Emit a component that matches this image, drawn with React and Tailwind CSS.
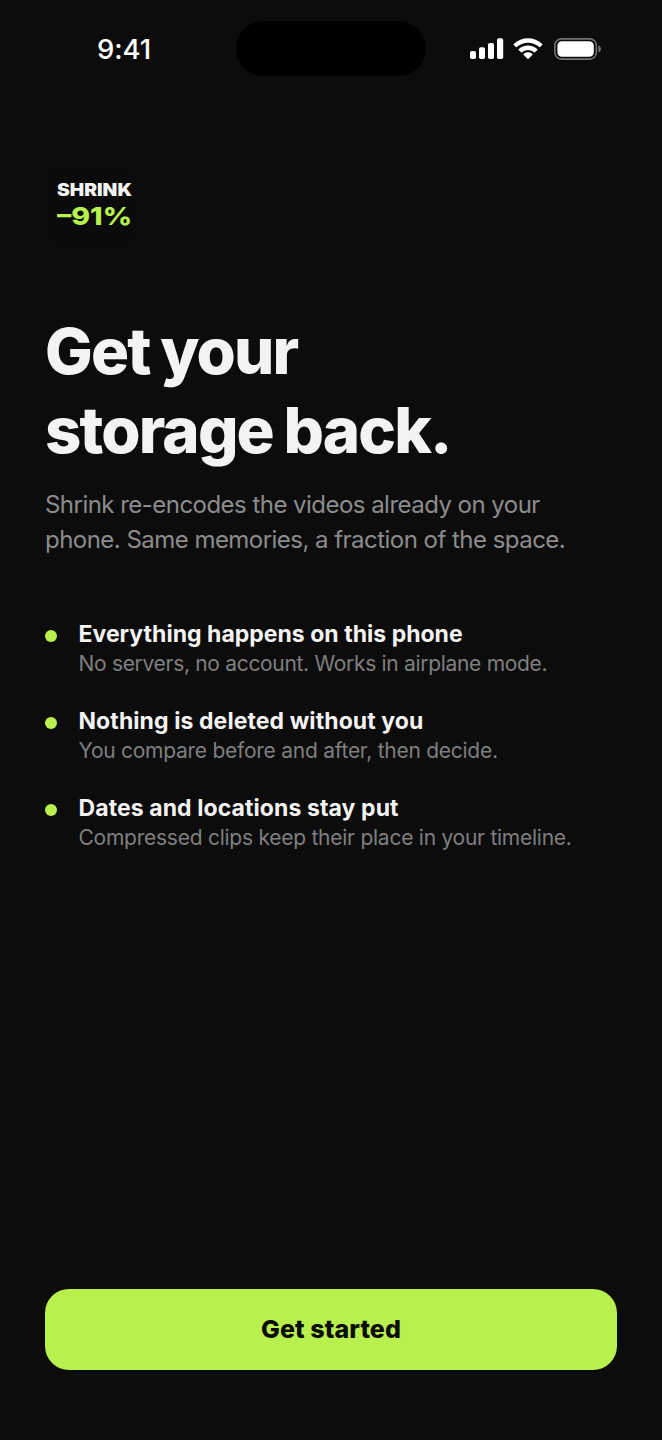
import React from 'react';

const features = [
  {
    title: 'Everything happens on this phone',
    text: 'No servers, no account. Works in airplane mode.',
    titleClass: 'tracking-[0.02px]',
    textClass: 'tracking-[-0.31px]'
  },
  {
    title: 'Nothing is deleted without you',
    text: 'You compare before and after, then decide.',
    titleClass: 'tracking-[0.09px]',
    textClass: 'tracking-[-0.26px]'
  },
  {
    title: 'Dates and locations stay put',
    text: 'Compressed clips keep their place in your timeline.',
    titleClass: 'tracking-[0.09px]',
    textClass: 'tracking-[-0.25px]'
  }
];

const SignalIcon = () => (
  <svg width="34" height="22" viewBox="0 0 34 22" fill="white">
    <rect x="0" y="13" width="6" height="8" rx="1.8" />
    <rect x="9" y="9.2" width="6" height="11.8" rx="1.8" />
    <rect x="18" y="5" width="6" height="16" rx="1.8" />
    <rect x="27" y="0.3" width="6.2" height="20.7" rx="1.8" />
  </svg>
);

const WifiIcon = () => (
  <svg width="30" height="22" viewBox="0 0 17 12.4" fill="white">
    <path d="M8.5 2.6c2.4 0 4.7.9 6.4 2.5.1.1.3.1.5 0l1.2-1.3c.2-.2.2-.4 0-.5C12.1-1 4.9-1 .4 3.3c-.2.1-.2.3 0 .5l1.2 1.3c.2.1.4.1.5 0 1.7-1.6 4-2.5 6.4-2.5z" />
    <path d="M8.5 6.7c1.3 0 2.6.5 3.5 1.4.2.1.4.1.5 0l1.3-1.3c.1-.2.1-.4 0-.5-3-2.8-7.6-2.8-10.6 0-.2.1-.2.4 0 .5l1.3 1.3c.1.1.3.1.5 0 1-.9 2.2-1.4 3.5-1.4z" />
    <path d="M11 9.5c.2-.2.2-.4 0-.5-1.4-1.2-3.6-1.2-5 0-.2.1-.2.3 0 .5l2.2 2.2c.2.2.4.2.6 0z" />
  </svg>
);

const BatteryIcon = () => (
  <svg width="48" height="22" viewBox="0 0 48 22">
    <rect x="0.9" y="0.9" width="41.4" height="20.2" rx="6.5" fill="none" stroke="#737373" strokeWidth="1.6" />
    <rect x="3.4" y="3.3" width="36.4" height="15.4" rx="4.5" fill="white" />
    <path d="M44.3 7.5c1.6.6 2.7 1.9 2.7 3.5s-1.1 2.9-2.7 3.5z" fill="#737373" />
  </svg>
);

const StatusBar = () => (
  <header className="h-[98px] flex items-start justify-between pl-[97px] pr-[60px] pt-[21px]">
    <div className="w-[139px] h-[58px] flex items-center text-[27.5px] font-medium text-white tracking-[-0.1px]">
      9:41
    </div>
    <div className="w-[190px] h-[55px] rounded-full bg-black" />
    <div className="flex-1 h-[55px] flex items-center justify-end">
      <SignalIcon />
      <div className="ml-[9px]"><WifiIcon /></div>
      <div className="ml-[11px]"><BatteryIcon /></div>
    </div>
  </header>
);

const Logo = () => (
  <div className="size-[91px] rounded-[20px] bg-[#0b0b0b] pt-[19px] pl-[11.5px] whitespace-nowrap">
    <p className="w-fit origin-left scale-x-[1.13] text-[17px] leading-5 font-black text-[#f4f3f2]">SHRINK</p>
    <p className="w-fit origin-left scale-x-[1.14] mt-px text-[25px] leading-[30px] font-extrabold text-[#b8f04e]">–91%</p>
  </div>
);

export default function App() {
  return (
    <div className="h-[1440px] w-[662px] flex flex-col overflow-hidden bg-[#0c0c0c] font-['Inter',sans-serif]">
      <StatusBar />

      <main className="flex-1 flex flex-col px-[45px] pt-[63px] pb-[70px]">
        <Logo />

        <h1 className="mt-[59px] text-[63.5px] leading-[79px] font-extrabold tracking-[-1.85px] [word-spacing:-1.5px] text-[#f4f3f2]">
          Get your<br />storage back.
        </h1>

        <p className="mt-[18px] text-[24px] leading-[35px] tracking-[-0.53px] text-[#8c8c8c] whitespace-nowrap">
          Shrink re-encodes the videos already on your<br />
          phone. Same memories, a fraction of the space.
        </p>

        <ul className="mt-[62px] flex flex-col gap-[27px]">
          {features.map((item) => (
            <li key={item.title} className="flex gap-[21.5px] whitespace-nowrap">
              <span className="mt-[11px] size-3 shrink-0 rounded-full bg-[#b8f04e]" />
              <div>
                <p className={`text-[23px] leading-[30px] font-[650] text-[#f4f3f2] ${item.titleClass}`}>{item.title}</p>
                <p className={`text-[21px] leading-[30px] text-[#7f7f7f] ${item.textClass}`}>{item.text}</p>
              </div>
            </li>
          ))}
        </ul>

        <button className="mt-auto h-[81px] w-full rounded-[24px] bg-[#b8f04e] text-[25px] font-extrabold tracking-[0.1px] text-[#0c0c0c]">
          Get started
        </button>
      </main>
    </div>
  );
}
